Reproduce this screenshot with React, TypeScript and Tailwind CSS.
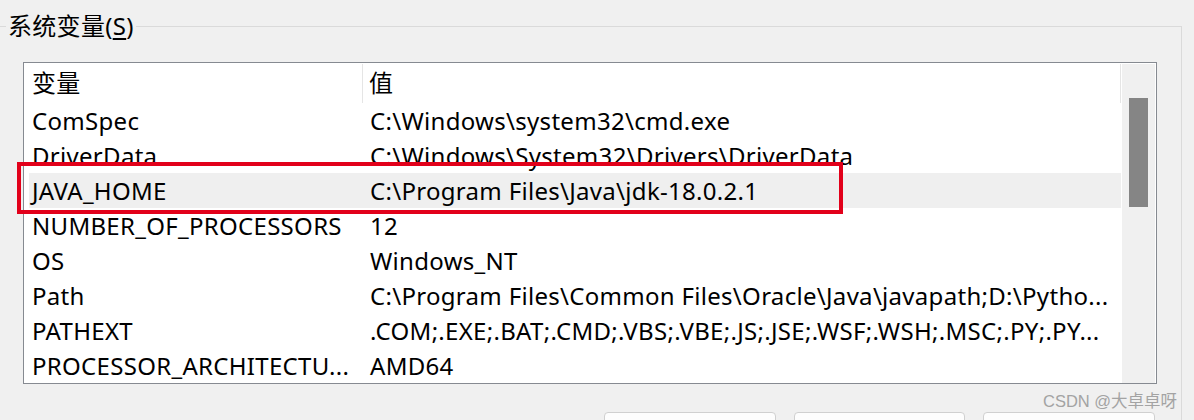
const rows: [string, string][] = [
  ['ComSpec', 'C:\\Windows\\system32\\cmd.exe'],
  ['DriverData', 'C:\\Windows\\System32\\Drivers\\DriverData'],
  ['JAVA_HOME', 'C:\\Program Files\\Java\\jdk-18.0.2.1'],
  ['NUMBER_OF_PROCESSORS', '12'],
  ['OS', 'Windows_NT'],
  ['Path', 'C:\\Program Files\\Common Files\\Oracle\\Java\\javapath;D:\\Pytho...'],
  ['PATHEXT', '.COM;.EXE;.BAT;.CMD;.VBS;.VBE;.JS;.JSE;.WSF;.WSH;.MSC;.PY;.PY...'],
  ['PROCESSOR_ARCHITECTU...', 'AMD64'],
]

const selected = 2

export default function App() {
  return (
    <div
      className="relative w-[1194px] h-[420px] overflow-hidden bg-[#f0f0f0] text-[24px] text-black"
      style={{ fontFamily: '"Noto Sans", "Noto Sans CJK SC", sans-serif' }}
    >
      <fieldset className="mt-[13px] w-[1182px] h-[420px] border-t border-r border-[#dadada] p-0">
        <legend className="ml-[6px] px-[2px] leading-[26px] tracking-[0.3px]">
          系统变量(<span className="underline underline-offset-[3px]">S</span>)
        </legend>

        <div className="ml-[23px] mt-[23px] flex h-[322px] w-[1134px] border border-[#868a91] bg-white tracking-[0.3px]">
          <div className="flex w-[1097px] flex-col pl-[5px]">
            {/* header */}
            <div className="flex h-[40px] items-center">
              <div className="flex h-[39px] w-[334px] items-center border-r border-[#e5e5e5] pl-[3px]">
                变量
              </div>
              <div className="flex h-[39px] flex-1 items-center border-r border-[#e5e5e5] pl-[6px]">
                值
              </div>
            </div>
            {rows.map(([name, value], i) => (
              <div
                key={name}
                className={`flex h-[35px] items-center whitespace-nowrap leading-[35px] ${i === selected ? 'bg-[#efefef]' : ''}`}
              >
                <div className="w-[338px] overflow-hidden pl-[3px]">{name}</div>
                <div className="flex-1 overflow-hidden pl-[3px]">{value}</div>
              </div>
            ))}
          </div>
          {/* scrollbar */}
          <div className="mt-[1px] ml-[1px] mr-[1px] w-[33px] bg-[#f0f0f0] px-[7px] pt-[34px]">
            <div className="h-[109px] bg-[#858585]" />
          </div>
        </div>

        <div className="ml-[23px] mt-[28px] flex w-[1134px] justify-end gap-[18px] pr-[2px]">
          <div className="h-[36px] w-[172px] rounded-[4px] border border-[#d0d0d0] bg-[#fdfdfd]" />
          <div className="h-[36px] w-[171px] rounded-[4px] border border-[#d0d0d0] bg-[#fdfdfd]" />
          <div className="h-[36px] w-[172px] rounded-[4px] border border-[#d0d0d0] bg-[#fdfdfd]" />
        </div>
      </fieldset>

      {/* annotation box */}
      <div className="absolute left-[17px] top-[162px] h-[52px] w-[826px] border-[4px] border-[#e2001a]" />

      {/* watermark */}
      <div
        className="absolute left-[1043px] top-[389px] text-[16.5px] leading-[24px] text-[#a3a3a3]"
        style={{ fontFamily: '"Liberation Sans", "Noto Sans CJK SC", sans-serif' }}
      >
        CSDN @大卓卓呀
      </div>
    </div>
  )
}
